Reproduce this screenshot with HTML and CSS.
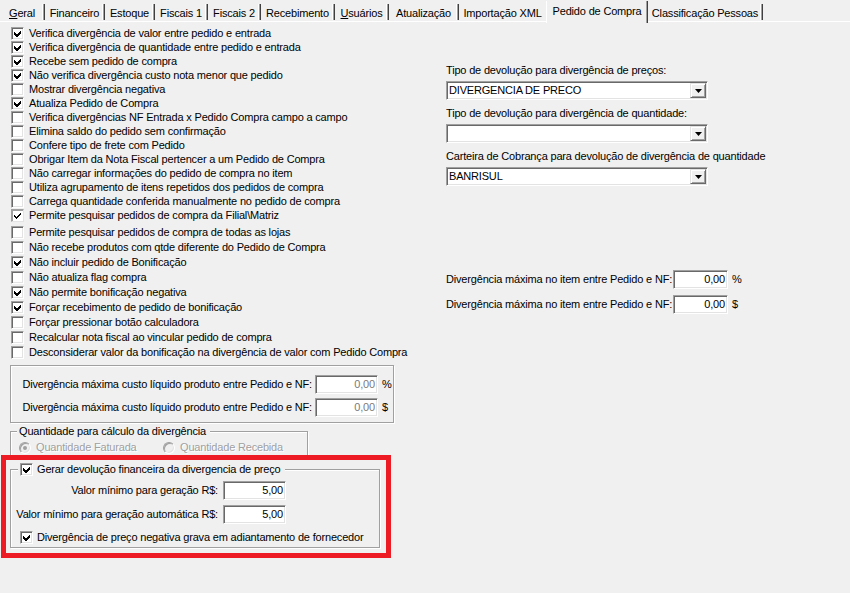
FILE: index.html
```html
<!DOCTYPE html>
<html lang="pt-BR">
<head>
<meta charset="utf-8">
<title>Pedido de Compra</title>
<link rel="stylesheet" href="styles.css">
</head>
<body>
<nav class="tabs">
  <span class="tab"><u>G</u>eral</span>
  <span class="tab">Financeiro</span>
  <span class="tab">Estoque</span>
  <span class="tab">Fiscais 1</span>
  <span class="tab">Fiscais 2</span>
  <span class="tab">Recebimento</span>
  <span class="tab"><u>U</u>suários</span>
  <span class="tab">Atualização</span>
  <span class="tab pre-active">Importação XML</span>
  <span class="tab active">Pedido de Compra</span>
  <span class="tab">Classificação Pessoas</span>
</nav>
<main class="panel">
  <section class="col-left">
    <ul class="checklist">
      <li class="chk"><span class="box"><svg class="tick" viewBox="0 0 9 9"><path d="M1 3 3.5 5.5 8 1 8 4 3.5 8.5 1 6Z"/></svg></span>Verifica divergência de valor entre pedido e entrada</li>
      <li class="chk"><span class="box"><svg class="tick" viewBox="0 0 9 9"><path d="M1 3 3.5 5.5 8 1 8 4 3.5 8.5 1 6Z"/></svg></span>Verifica divergência de quantidade entre pedido e entrada</li>
      <li class="chk"><span class="box"><svg class="tick" viewBox="0 0 9 9"><path d="M1 3 3.5 5.5 8 1 8 4 3.5 8.5 1 6Z"/></svg></span>Recebe sem pedido de compra</li>
      <li class="chk"><span class="box"><svg class="tick" viewBox="0 0 9 9"><path d="M1 3 3.5 5.5 8 1 8 4 3.5 8.5 1 6Z"/></svg></span>Não verifica divergência custo nota menor que pedido</li>
      <li class="chk"><span class="box"></span>Mostrar divergência negativa</li>
      <li class="chk"><span class="box"><svg class="tick" viewBox="0 0 9 9"><path d="M1 3 3.5 5.5 8 1 8 4 3.5 8.5 1 6Z"/></svg></span>Atualiza Pedido de Compra</li>
      <li class="chk"><span class="box"></span>Verifica divergências NF Entrada x Pedido Compra campo a campo</li>
      <li class="chk"><span class="box"></span>Elimina saldo do pedido sem confirmação</li>
      <li class="chk"><span class="box"></span>Confere tipo de frete com Pedido</li>
      <li class="chk"><span class="box"></span>Obrigar Item da Nota Fiscal pertencer a um Pedido de Compra</li>
      <li class="chk"><span class="box"></span>Não carregar informações do pedido de compra no item</li>
      <li class="chk"><span class="box"></span>Utiliza agrupamento de itens repetidos dos pedidos de compra</li>
      <li class="chk"><span class="box"></span>Carrega quantidade conferida manualmente no pedido de compra</li>
      <li class="chk"><span class="box flat"><svg class="tick" viewBox="0 0 9 9"><path d="M1 3.5 3.5 6 8 1.5 8 3.5 3.5 8 1 5.5Z"/></svg></span>Permite pesquisar pedidos de compra da Filial\Matriz</li>
      <li class="chk tall spaced"><span class="box"></span>Permite pesquisar pedidos de compra de todas as lojas</li>
      <li class="chk tall"><span class="box"></span>Não recebe produtos com qtde diferente do Pedido de Compra</li>
      <li class="chk tall"><span class="box"><svg class="tick" viewBox="0 0 9 9"><path d="M1 3 3.5 5.5 8 1 8 4 3.5 8.5 1 6Z"/></svg></span>Não incluir pedido de Bonificação</li>
      <li class="chk tall"><span class="box"></span>Não atualiza flag compra</li>
      <li class="chk tall"><span class="box"><svg class="tick" viewBox="0 0 9 9"><path d="M1 3 3.5 5.5 8 1 8 4 3.5 8.5 1 6Z"/></svg></span>Não permite bonificação negativa</li>
      <li class="chk tall"><span class="box"><svg class="tick" viewBox="0 0 9 9"><path d="M1 3 3.5 5.5 8 1 8 4 3.5 8.5 1 6Z"/></svg></span>Forçar recebimento de pedido de bonificação</li>
      <li class="chk tall"><span class="box"></span>Forçar pressionar botão calculadora</li>
      <li class="chk tall"><span class="box"></span>Recalcular nota fiscal ao vincular pedido de compra</li>
      <li class="chk tall"><span class="box"></span>Desconsiderar valor da bonificação na divergência de valor com Pedido Compra</li>
    </ul>

    <div class="group cost">
      <span class="lbl">Divergência máxima custo líquido produto entre Pedido e NF:</span>
      <span class="edit disabled">0,00</span>
      <span class="sym">%</span>
      <span class="lbl">Divergência máxima custo líquido produto entre Pedido e NF:</span>
      <span class="edit disabled">0,00</span>
      <span class="sym">$</span>
    </div>

    <fieldset class="group qty">
      <legend class="legend">Quantidade para cálculo da divergência</legend>
      <div class="radios">
        <span class="radio-item"><span class="radio checked"></span>Quantidade Faturada</span>
        <span class="radio-item"><span class="radio"></span>Quantidade Recebida</span>
      </div>
    </fieldset>

    <div class="highlight">
      <fieldset class="group fin">
        <legend class="legend chk-legend"><span class="box"><svg class="tick" viewBox="0 0 9 9"><path d="M1 3 3.5 5.5 8 1 8 4 3.5 8.5 1 6Z"/></svg></span>Gerar devolução financeira da divergencia de preço</legend>
        <div class="fin-grid">
          <span class="lbl">Valor mínimo para geração R$:</span>
          <span class="edit">5,00</span>
          <span class="lbl">Valor mínimo para geração automática R$:</span>
          <span class="edit">5,00</span>
        </div>
        <div class="chk fin-chk"><span class="box"><svg class="tick" viewBox="0 0 9 9"><path d="M1 3 3.5 5.5 8 1 8 4 3.5 8.5 1 6Z"/></svg></span>Divergência de preço negativa grava em adiantamento de fornecedor</div>
      </fieldset>
    </div>
  </section>

  <section class="col-right">
    <div class="field-label">Tipo de devolução para divergência de preços:</div>
    <div class="combo"><span class="combo-text">DIVERGENCIA DE PRECO</span><span class="combo-btn"><svg viewBox="0 0 7 4" width="7" height="4"><path d="M0 0H7L3.5 4Z"/></svg></span></div>
    <div class="field-label">Tipo de devolução para divergência de quantidade:</div>
    <div class="combo"><span class="combo-text"></span><span class="combo-btn"><svg viewBox="0 0 7 4" width="7" height="4"><path d="M0 0H7L3.5 4Z"/></svg></span></div>
    <div class="field-label">Carteira de Cobrança para devolução de divergência de quantidade</div>
    <div class="combo"><span class="combo-text">BANRISUL</span><span class="combo-btn"><svg viewBox="0 0 7 4" width="7" height="4"><path d="M0 0H7L3.5 4Z"/></svg></span></div>

    <div class="item-grid">
      <span class="lbl">Divergência máxima no item entre Pedido e NF:</span>
      <span class="edit">0,00</span>
      <span class="sym">%</span>
      <span class="lbl">Divergência máxima no item entre Pedido e NF:</span>
      <span class="edit">0,00</span>
      <span class="sym">$</span>
    </div>
  </section>
</main>
</body>
</html>
```

FILE: styles.css
```css
* { box-sizing: border-box; }
html, body { margin: 0; padding: 0; }
body {
  width: 850px;
  height: 593px;
  overflow: hidden;
  background: #f0f0f0;
  color: #000;
  font: 11px/1 "Liberation Sans", Arial, sans-serif;
  letter-spacing: -0.18px;
}

/* ---------- tabs ---------- */
.tabs {
  display: flex;
  height: 21px;
}
.tab {
  display: flex;
  justify-content: center;
  height: 16px;
  margin-top: 4px;
  padding-top: 3px;
  line-height: 13px;
  white-space: nowrap;
  background: #f0f0f0;
  border-right: 1px solid #404040;
  box-shadow: inset -1px 0 #a0a0a0, inset -2px 0 #fff;
}
.tab u { text-decoration: underline; text-underline-offset: 1px; }
.tab:nth-child(1) { width: 45px; }
.tab:nth-child(2) { width: 60px; }
.tab:nth-child(3) { width: 50px; }
.tab:nth-child(4) { width: 53px; }
.tab:nth-child(5) { width: 53px; }
.tab:nth-child(6) { width: 74px; }
.tab:nth-child(7) { width: 54px; }
.tab:nth-child(8) { width: 70px; }
.tab:nth-child(9) { width: 87px; }
.tab:nth-child(10) { width: 102px; }
.tab:nth-child(11) { width: 115px; }
.tab.pre-active { border-right: 0; box-shadow: none; }
.tab.active {
  height: 22px;
  margin-top: 1px;
  padding-top: 4px;
  border-left: 1px solid #fff;
  border-right: 1px solid #404040;
  box-shadow: inset -1px 0 #a0a0a0;
}

/* ---------- panel ---------- */
.panel {
  display: flex;
  height: 572px;
  border-top: 1px solid #fff;
}
.col-left {
  width: 446px;
  flex: none;
}
.col-right {
  flex: 1;
  padding-top: 41px;
}

/* ---------- checkboxes ---------- */
.checklist {
  list-style: none;
  margin: 0;
  padding: 4px 0 0 11px;
}
.chk {
  display: flex;
  align-items: center;
  gap: 5px;
  height: 14px;
  white-space: nowrap;
}
.chk.tall { height: 15px; }
.chk.spaced { margin-top: 3px; }
.box {
  flex: none;
  width: 13px;
  height: 13px;
  padding: 1px;
  background: #fff;
  border: 1px solid;
  border-color: #a0a0a0 #fff #fff #a0a0a0;
  box-shadow: inset 1px 1px #696969, inset -1px -1px #e3e3e3;
  display: flex;
}
.box.flat {
  border-color: #a0a0a0 #e3e3e3 #e3e3e3 #a0a0a0;
  box-shadow: inset 1px 1px #a0a0a0;
}
.tick {
  width: 9px;
  height: 9px;
  display: block;
  shape-rendering: crispEdges;
}
.tick path { fill: #000; }

/* ---------- group boxes ---------- */
.group {
  border: 1px solid #a0a0a0;
  box-shadow: 1px 1px 0 #fff, inset 1px 1px 0 #fff;
}
fieldset.group {
  padding: 0;
  min-width: 0;
}
.legend {
  margin-left: 6px;
  padding: 0 4px 0 2px;
  height: 14px;
  line-height: 14px;
  background: #f0f0f0;
  white-space: nowrap;
}

.lbl {
  align-self: center;
  white-space: nowrap;
  text-align: right;
}
.sym {
  align-self: center;
  padding-left: 4px;
}
.edit {
  height: 19px;
  padding: 0 2px 0 2px;
  display: flex;
  align-items: center;
  justify-content: flex-end;
  background: #fff;
  border: 1px solid;
  border-color: #a0a0a0 #fff #fff #a0a0a0;
  box-shadow: inset 1px 1px #696969, inset -1px -1px #e3e3e3;
}
.edit.disabled { color: #7a7a7a; }

.group.cost {
  margin: 5px 0 0 10px;
  width: 384px;
  height: 58px;
  padding: 9px 0 0 8px;
  display: grid;
  grid-template-columns: minmax(0, 1fr) 63px 15px;
  row-gap: 4px;
  align-content: start;
}
.cost .lbl { padding-right: 3px; }

.group.qty {
  margin: 1px 0 0 10px;
  width: 298px;
}
.radios {
  display: grid;
  grid-template-columns: 144px 144px;
  padding: 3px 0 2px 8px;
}
.radio-item {
  display: flex;
  align-items: center;
  gap: 5px;
  height: 13px;
  color: #a0a0a0;
  text-shadow: 1px 1px 0 #fff;
  white-space: nowrap;
}
.radio {
  flex: none;
  width: 12px;
  height: 12px;
  border-radius: 50%;
  border: 1px solid;
  border-color: #a0a0a0 #fff #fff #a0a0a0;
  box-shadow: inset 1px 1px #a0a0a0, inset -1px -1px #e3e3e3;
  background: #f0f0f0;
  display: flex;
  align-items: center;
  justify-content: center;
}
.radio.checked::after {
  content: "";
  width: 4px;
  height: 4px;
  border-radius: 50%;
  background: #a0a0a0;
}

/* ---------- highlighted group ---------- */
.highlight {
  margin: -2px 0 0 1px;
  width: 390px;
  height: 103px;
  border: 5px solid #ed1c24;
  padding: 2px 0 0 4px;
}
.group.fin {
  margin: 0;
  width: 370px;
}
.chk-legend {
  display: flex;
  align-items: center;
  gap: 4px;
  margin-left: 7px;
}
.fin-grid {
  display: grid;
  grid-template-columns: 208px 63px;
  column-gap: 4px;
  row-gap: 5px;
  padding-top: 5px;
}
.fin-grid .lbl { padding-right: 1px; }
.fin-chk {
  margin-top: 6px;
  margin-bottom: 3px;
  padding-left: 9px;
  gap: 4px;
}

/* ---------- right column ---------- */
.field-label {
  height: 14px;
  line-height: 14px;
  margin-bottom: 4px;
  white-space: nowrap;
}
.combo {
  width: 262px;
  height: 19px;
  margin-bottom: 6px;
  display: flex;
  align-items: stretch;
  background: #fff;
  border: 1px solid;
  border-color: #a0a0a0 #fff #fff #a0a0a0;
  box-shadow: inset 1px 1px #696969, inset -1px -1px #e3e3e3;
  padding: 1px;
}
.combo-text {
  flex: 1;
  display: flex;
  align-items: center;
  padding-left: 1px;
  white-space: nowrap;
}
.combo-btn {
  flex: none;
  width: 16px;
  background: #f0f0f0;
  border: 1px solid;
  border-color: #e3e3e3 #696969 #696969 #e3e3e3;
  box-shadow: inset 1px 1px #fff, inset -1px -1px #a0a0a0;
  display: flex;
  align-items: center;
  justify-content: center;
}
.combo-btn svg { display: block; }
.combo-btn path { fill: #000; }

.item-grid {
  margin-top: 84px;
  display: grid;
  grid-template-columns: 227px 55px auto;
  row-gap: 6px;
  align-content: start;
}
.item-grid .lbl { text-align: left; }
```
